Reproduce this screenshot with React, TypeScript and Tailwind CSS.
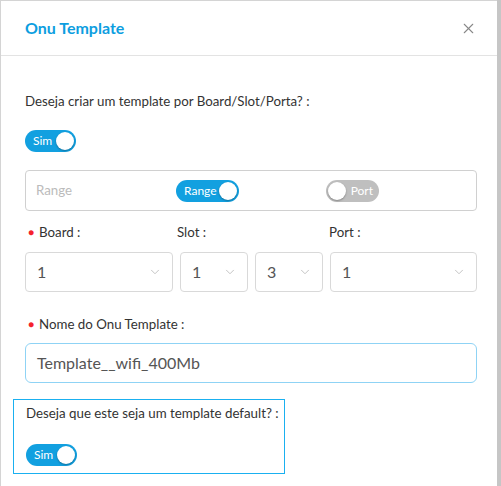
import { X, ChevronDown } from "lucide-react";

function Toggle({ label, on, width }: { label: string; on: boolean; width: string }) {
  return (
    <div
      className={`flex h-[22px] items-center justify-between rounded-full px-[2px] ${width} ${
        on ? "bg-[#12a0e0]" : "bg-[#bfbfbf]"
      }`}
    >
      {on ? (
        <>
          <span className="pl-[6px] text-[12px] leading-none text-white">{label}</span>
          <span className="h-[18px] w-[18px] rounded-full bg-white shadow-[0_1px_2px_rgba(0,0,0,0.3)]" />
        </>
      ) : (
        <>
          <span className="h-[18px] w-[18px] rounded-full bg-white shadow-[0_1px_2px_rgba(0,0,0,0.3)]" />
          <span className="pr-[4px] text-[12px] leading-none text-white">{label}</span>
        </>
      )}
    </div>
  );
}

function Select({ value, className }: { value: string; className: string }) {
  return (
    <div
      className={`flex h-[40px] items-center justify-between rounded-[4px] border border-[#d9d9d9] pl-[11px] pr-[10px] ${className}`}
    >
      <span className="text-[16px] text-[#555]">{value}</span>
      <ChevronDown className="h-[14px] w-[14px] text-[#bbb]" strokeWidth={1.5} />
    </div>
  );
}

export default function App() {
  return (
    <div
      className="flex h-[486px] w-[501px] overflow-hidden bg-white text-[#333]"
      style={{ fontFamily: "Lato, 'Liberation Sans', sans-serif" }}
    >
      <div className="flex-1 border-t border-l border-[#d4d4d4]">
        <div className="flex h-[55px] items-center justify-between border-b border-[#e3e3e3] pl-[24px] pr-[20px]">
          <h1 className="text-[16px] font-bold text-[#0d9ee0]">Onu Template</h1>
          <X className="h-[17px] w-[17px] text-[#888]" strokeWidth={1.5} />
        </div>

        <div className="pl-[24px] pr-[20px] pt-[34px]">
          <p className="text-[13.3px] leading-[22px]">Deseja criar um template por Board/Slot/Porta? :</p>
          <div className="mt-[18px]">
            <Toggle label="Sim" on width="w-[51px]" />
          </div>

          <div className="mt-[18px] flex h-[41px] items-center rounded-[4px] border border-[#d0d0d0] px-[10px]">
            <span className="w-[140px] text-[13.3px] text-[#bbb]">Range</span>
            <div className="w-[150px]">
              <Toggle label="Range" on width="w-[63px]" />
            </div>
            <Toggle label="Port" on={false} width="w-[53px]" />
          </div>

          <div className="mt-[10px] flex text-[13.3px] leading-[22px]">
            <div className="flex w-[152px] items-center gap-[5px] pl-[3px]">
              <span className="text-[10px] text-[#f5222d]">●</span>
              <span>Board :</span>
            </div>
            <div className="w-[152px]">Slot :</div>
            <div>Port :</div>
          </div>

          <div className="mt-[9px] flex gap-[7px]">
            <Select value="1" className="w-[148px]" />
            <Select value="1" className="w-[68px]" />
            <Select value="3" className="w-[68px]" />
            <Select value="1" className="flex-1" />
          </div>

          <div className="mt-[21px] flex items-center gap-[5px] pl-[3px] text-[13.3px] leading-[22px]">
            <span className="text-[10px] text-[#f5222d]">●</span>
            <span>Nome do Onu Template :</span>
          </div>

          <div className="mt-[8px] flex h-[40px] items-center rounded-[6px] border border-[#8fd3f5] px-[11px] text-[16px] text-[#555]">
            Template__wifi_400Mb
          </div>
        </div>

        <div className="ml-[12px] mt-[16px] h-[75px] w-[272px] border border-[#1ab0f0] px-[12px] pt-[2px]">
          <p className="whitespace-nowrap text-[13.3px] leading-[22px]">Deseja que este seja um template default? :</p>
          <div className="mt-[20px]">
            <Toggle label="Sim" on width="w-[51px]" />
          </div>
        </div>
      </div>
      <div className="w-[4px] bg-[#c6c6c6]" />
    </div>
  );
}
